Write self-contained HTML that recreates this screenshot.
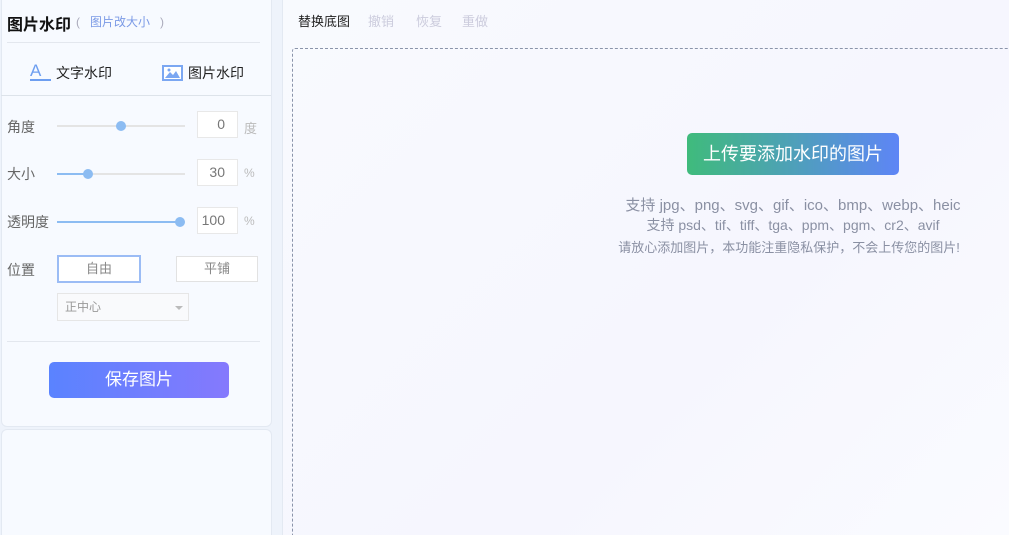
<!DOCTYPE html>
<html style="width:1009px;height:535px;overflow:hidden"><head><meta charset="utf-8"><style>
*{box-sizing:border-box;margin:0;padding:0}
body{width:1009px;height:535px;overflow:hidden;background:#eef3fb;font-family:"Liberation Sans","Noto Sans CJK SC",sans-serif;position:relative}
.card{position:absolute;background:#f7faff;border:1px solid #e3e9f2;border-radius:6px}
.a{position:absolute;white-space:nowrap}
.lbl{font-size:14px;color:#666}
.track{position:absolute;height:2px;background:#e4e4e4;left:57px;width:128px}
.fill{position:absolute;height:2px;background:#8cbcf2;left:57px}
.dot{position:absolute;width:10px;height:10px;border-radius:50%;background:#8cbcf2}
.inp{position:absolute;left:197px;width:41px;height:27px;border:1px solid #e8e8e8;background:#fff;font-size:14px;color:#777;text-align:right;padding-right:12px;line-height:25px}
.unit{position:absolute;left:244px;font-size:12px;color:#bbb}
</style></head><body>
<div class="card" style="left:1px;top:-6px;width:271px;height:433px"></div>
<div class="card" style="left:1px;top:429px;width:271px;height:106px;border-bottom:none;border-radius:6px 6px 0 0"></div>
<div class="card" style="left:282px;top:-6px;width:727px;height:541px;background:linear-gradient(135deg,#f8fafe,#f6f6fe 60%,#fafbff);border-right:none;border-bottom:none;border-radius:6px 0 0 0"></div>

<div class="a" style="left:7px;top:11px;font-size:16px;font-weight:bold;color:#111">图片水印</div>
<div class="a" style="left:76px;top:13px;font-size:12px;color:#9aa"><span style="color:#aab">(</span>&nbsp;&nbsp;&nbsp;<span style="color:#7b9ae6">图片改大小</span>&nbsp;&nbsp;&nbsp;<span style="color:#aab">)</span></div>
<div class="a" style="left:7px;top:42px;width:253px;height:1px;background:#e3e7ee"></div>
<div class="a" style="left:30px;top:62px;font-size:17px;color:#6d9ef0;line-height:17px">A</div>
<div class="a" style="left:30px;top:79px;width:21px;height:2px;background:#6d9ef0"></div>
<div class="a" style="left:56px;top:63px;font-size:14px;color:#222">文字水印</div>
<svg class="a" style="left:162px;top:65px" width="21" height="16" viewBox="0 0 21 16"><rect x="1" y="1" width="19" height="14" fill="#fff" stroke="#7ba7f2" stroke-width="2"/><path d="M3 13 L8 7 L11 10 L14 6 L18 13Z" fill="#7ba7f2"/><circle cx="7" cy="5" r="1.5" fill="#7ba7f2"/></svg>
<div class="a" style="left:188px;top:63px;font-size:14px;color:#222">图片水印</div>
<div class="a" style="left:1px;top:95px;width:270px;height:1px;background:#dde3ea"></div>

<div class="a lbl" style="left:7px;top:117px">角度</div>
<div class="track" style="top:125px"></div>
<div class="dot" style="left:116px;top:121px"></div>
<div class="inp" style="top:111px">0</div>
<div class="unit" style="top:118px;font-size:13px">度</div>

<div class="a lbl" style="left:7px;top:164px">大小</div>
<div class="track" style="top:173px"></div>
<div class="fill" style="top:173px;width:32px"></div>
<div class="dot" style="left:83px;top:169px"></div>
<div class="inp" style="top:159px">30</div>
<div class="unit" style="top:166px">%</div>

<div class="a lbl" style="left:7px;top:212px">透明度</div>
<div class="track" style="top:221px"></div>
<div class="fill" style="top:221px;width:124px"></div>
<div class="dot" style="left:175px;top:217px"></div>
<div class="inp" style="top:207px">100</div>
<div class="unit" style="top:214px">%</div>

<div class="a lbl" style="left:7px;top:260px">位置</div>
<div class="a" style="left:57px;top:255px;width:84px;height:28px;border:2px solid #9bbcf5;background:#fff;text-align:center;line-height:24px;font-size:13px;color:#888">自由</div>
<div class="a" style="left:176px;top:256px;width:82px;height:26px;border:1px solid #e2e2e2;background:#fff;text-align:center;line-height:24px;font-size:13px;color:#888">平铺</div>
<div class="a" style="left:57px;top:293px;width:132px;height:28px;border:1px solid #e6e6e6;background:#f9fafc;font-size:12px;color:#999;line-height:26px;padding-left:7px">正中心</div>
<div class="a" style="left:175px;top:306px;width:0;height:0;border-left:4px solid transparent;border-right:4px solid transparent;border-top:4px solid #bbb"></div>
<div class="a" style="left:7px;top:341px;width:253px;height:1px;background:#e3e7ee"></div>
<div class="a" style="left:49px;top:362px;width:180px;height:36px;border-radius:5px;background:linear-gradient(90deg,#5a83ff,#8579fd);color:#fff;font-size:17px;text-align:center;line-height:36px">保存图片</div>

<div class="a" style="left:298px;top:11px;font-size:13px;color:#222">替换底图</div>
<div class="a" style="left:368px;top:11px;font-size:13px;color:#ccd">撤销</div>
<div class="a" style="left:416px;top:11px;font-size:13px;color:#ccd">恢复</div>
<div class="a" style="left:462px;top:11px;font-size:13px;color:#ccd">重做</div>
<div class="a" style="left:292px;top:48px;width:730px;height:500px;border:1px dashed #8a94aa;border-radius:3px"></div>
<div class="a" style="left:687px;top:133px;width:212px;height:42px;border-radius:5px;background:linear-gradient(90deg,#3fbb7c,#5e85f6);color:#fff;font-size:18px;text-align:center;line-height:42px">上传要添加水印的图片</div>
<div class="a" style="left:600px;top:194px;width:386px;text-align:center;font-size:15px;color:#8a90a3">支持 jpg、png、svg、gif、ico、bmp、webp、heic</div>
<div class="a" style="left:600px;top:215px;width:386px;text-align:center;font-size:14px;color:#8a90a3">支持 psd、tif、tiff、tga、ppm、pgm、cr2、avif</div>
<div class="a" style="left:600px;top:237px;width:378px;text-align:center;font-size:13px;color:#8a90a3">请放心添加图片，本功能注重隐私保护，不会上传您的图片!</div>
</body></html>
